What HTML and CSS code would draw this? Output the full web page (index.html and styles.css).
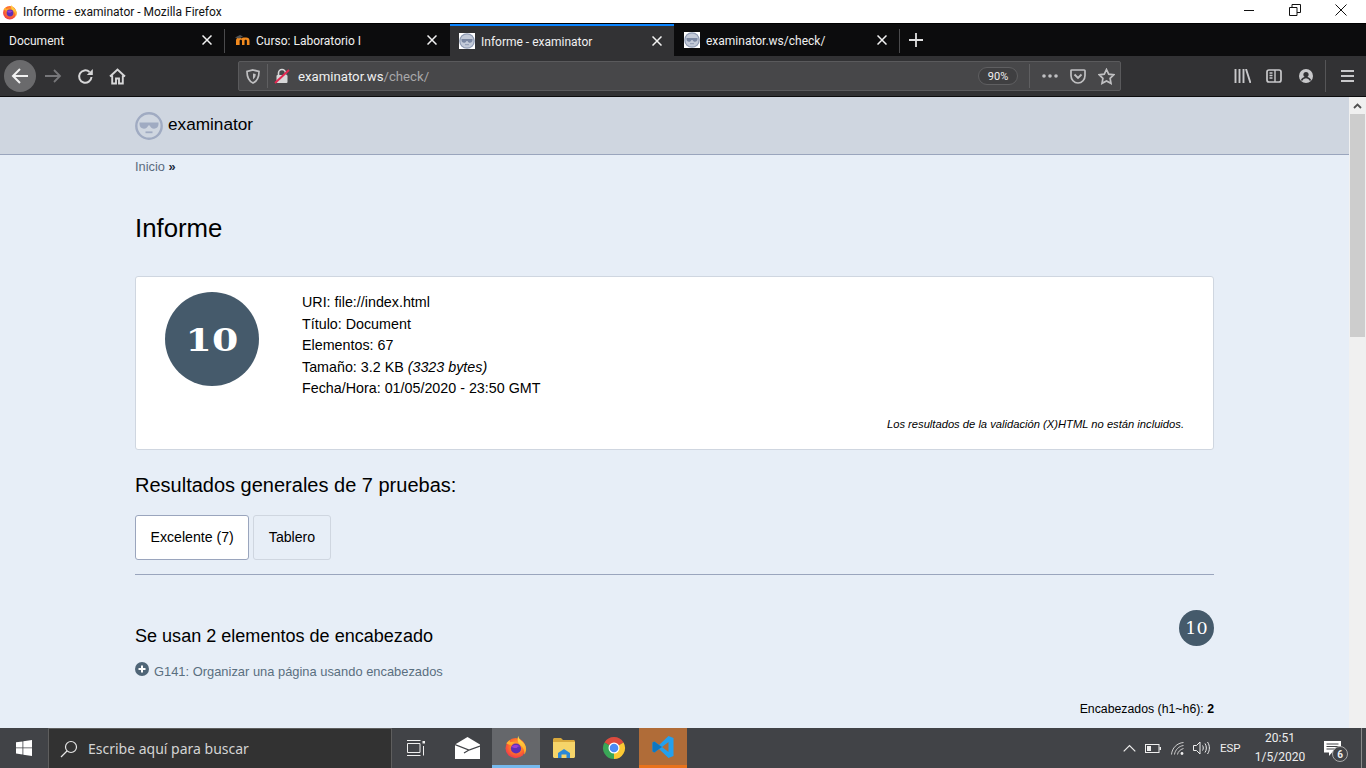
FILE: index.html
```html
<!DOCTYPE html>
<html lang="es">
<head>
<meta charset="utf-8">
<title>Informe - examinator - Mozilla Firefox</title>
<link rel="stylesheet" href="styles.css">
</head>
<body>
<svg class="defs" width="0" height="0" aria-hidden="true">
  <defs>
    <radialGradient id="ffbody" cx="0.55" cy="0.4" r="0.7">
      <stop offset="0" stop-color="#ffbd2e"/>
      <stop offset="0.55" stop-color="#ff6a2b"/>
      <stop offset="1" stop-color="#e8255e"/>
    </radialGradient>
    <linearGradient id="ffflame" x1="0" y1="0" x2="0" y2="1">
      <stop offset="0" stop-color="#ffe24a"/>
      <stop offset="1" stop-color="#ff9a22"/>
    </linearGradient>
    <symbol id="firefox" viewBox="0 0 32 32">
      <circle cx="15.500" cy="17.500" r="13.500" fill="url(#ffbody)"/>
      <path d="M19 1c.5 3 1.500 4.500 4 6.500 4 3 6.500 6.500 6.500 11 0 3-1 5.500-2.500 7.500.5-5-1-9.500-5-12.500C18 10.500 17.500 6 19 1z" fill="url(#ffflame)"/>
      <path d="M3 11c1.500-2 3-3.500 5-4.500-.5 1.500-.3 2.500.3 3.200 2-.6 4.700-.6 6.700.3-2.500.5-4 1.500-4.500 3-3 .5-5.500-.2-7.500-2z" fill="#ffb02e"/>
      <circle cx="16" cy="18" r="6.800" fill="#5e2fb5"/>
      <path d="M10 15.500c2-2.500 8-3.500 11.500 0-2.500-.5-3.500 0-4 1.500-2.500 1-5.500 0-7.500-1.500z" fill="#9a3fd0"/>
    </symbol>
    <symbol id="face" viewBox="0 0 28 28">
      <circle cx="14" cy="14" r="12.700" fill="none" stroke="#a0abc2" stroke-width="2.400"/>
      <path d="M4.500 10.500h19v1.800c0 2.600-2 4.400-4.400 4.400-2.200 0-3.700-1.200-4.300-3.200h-1.600c-.6 2-2.100 3.200-4.300 3.200-2.400 0-4.400-1.800-4.400-4.400z" fill="#a0abc2"/>
      <path d="M10.500 20.300h7" stroke="#a0abc2" stroke-width="1.800" fill="none"/>
    </symbol>
    <symbol id="favface" viewBox="0 0 16 16">
      <circle cx="8" cy="8" r="7.800" fill="#8e9ab3"/>
      <circle cx="8" cy="8" r="6.600" fill="#c3cad8"/>
      <path d="M2.500 6h11v1.200c0 1.500-1.100 2.500-2.500 2.500-1.200 0-2.100-.7-2.400-1.800h-1.200C7.100 9 6.200 9.700 5 9.700c-1.400 0-2.500-1-2.500-2.500z" fill="#7b88a3"/>
      <path d="M6 11.700h4" stroke="#8e9ab3" fill="none"/>
    </symbol>
    <symbol id="close" viewBox="0 0 10 10">
      <path d="M.5.500l9 9M9.500.500l-9 9" stroke="#f2f2f2" stroke-width="1.500" fill="none"/>
    </symbol>
  </defs>
</svg>

<div class="window">
  <header class="titlebar">
    <svg class="ti-logo"><use href="#firefox"/></svg>
    <span class="ti-text">Informe - examinator - Mozilla Firefox</span>
    <div class="ti-controls">
      <span class="ti-btn"><svg width="12" height="12" viewBox="0 0 12 12"><path d="M1 6.500h10" stroke="#111" fill="none"/></svg></span>
      <span class="ti-btn"><svg width="12" height="12" viewBox="0 0 12 12"><path d="M.5 3.500h7.500v8H.5zM3 3.500V.5h8.500v8H8" stroke="#111" fill="none"/></svg></span>
      <span class="ti-btn"><svg width="12" height="12" viewBox="0 0 12 12"><path d="M.5.500l11 11M11.500.500l-11 11" stroke="#111" fill="none"/></svg></span>
    </div>
  </header>

  <nav class="tabstrip">
    <div class="tab tab-sep">
      <span class="tab-label">Document</span>
      <svg class="tab-x"><use href="#close"/></svg>
    </div>
    <div class="tab">
      <svg class="tab-ico" viewBox="0 0 16 16"><path d="M1 13V8.500C1 6.500 2.500 5.500 4 5.500c1 0 1.800.4 2.300 1.100C7 5.900 7.800 5.500 8.800 5.500h2.400c2 0 3.300 1.200 3.300 3.200V13h-2.600V9c0-.9-.4-1.300-1.200-1.300S9.500 8.100 9.500 9v4H7V9c0-.9-.4-1.300-1.200-1.300-.7 0-1.200.4-1.200 1.300v4z" fill="#f28a1e"/><path d="M0 5.500L5 3l3 1.500-4 2z" fill="#555"/></svg>
      <span class="tab-label">Curso: Laboratorio I</span>
      <svg class="tab-x"><use href="#close"/></svg>
    </div>
    <div class="tab tab-active">
      <span class="tab-fav"><svg class="fav-face"><use href="#favface"/></svg></span>
      <span class="tab-label">Informe - examinator</span>
      <svg class="tab-x"><use href="#close"/></svg>
    </div>
    <div class="tab tab-last">
      <span class="tab-fav"><svg class="fav-face"><use href="#favface"/></svg></span>
      <span class="tab-label">examinator.ws/check/</span>
      <svg class="tab-x"><use href="#close"/></svg>
    </div>
    <span class="newtab"><svg width="16" height="16" viewBox="0 0 16 16"><path d="M8 1v14M1 8h14" stroke="#e0e0e0" stroke-width="1.800" fill="none"/></svg></span>
  </nav>

  <div class="toolbar">
    <span class="tb-btn tb-back"><svg width="20" height="20" viewBox="0 0 20 20"><path d="M18 10H3M10 3l-7 7 7 7" stroke="#f2f2f2" stroke-width="2" fill="none"/></svg></span>
    <span class="tb-btn"><svg width="18" height="18" viewBox="0 0 18 18"><path d="M1 9h15M10 3l6 6-6 6" stroke="#77777a" stroke-width="1.800" fill="none"/></svg></span>
    <span class="tb-btn"><svg width="17" height="17" viewBox="0 0 17 17"><path d="M14.500 9a6.200 6.200 0 1 1-2-5" stroke="#d7d7d8" stroke-width="2" fill="none"/><path d="M15.800 1v6h-6z" fill="#d7d7d8"/></svg></span>
    <span class="tb-btn"><svg width="17" height="17" viewBox="0 0 17 17"><path d="M1 8.500L8.500 1.500 16 8.500M3.200 7.500V15.500h3.800v-5h3v5h3.800V7.500" stroke="#d7d7d8" stroke-width="1.900" fill="none"/></svg></span>

    <div class="urlbar">
      <span class="url-shield"><svg width="14" height="15" viewBox="0 0 14 15"><path d="M7 1l6 1.500c0 5.500-1.500 9.500-6 11.500C2.500 12 1 8 1 2.500z" stroke="#c0c0c2" stroke-width="1.700" fill="none"/><path d="M7 4.500l2.700.6c0 2.500-.7 4-2.700 5.400z" fill="#c0c0c2"/></svg></span>
      <span class="url-sep"></span>
      <span class="url-lock"><svg width="16" height="16" viewBox="0 0 16 16"><path d="M4.500 7V5a3.500 3.500 0 0 1 7 0v2" stroke="#d7d7d8" stroke-width="1.600" fill="none"/><rect x="2.500" y="7" width="11" height="8" rx="1" fill="#d7d7d8"/><path d="M1 15L15 2" stroke="#e22850" stroke-width="2"/></svg></span>
      <span class="url-text">examinator.ws<span class="url-dim">/check/</span></span>
      <span class="url-zoom">90%</span>
      <span class="url-sep url-sep-b"></span>
      <span class="url-ico url-dots"><svg width="16" height="4" viewBox="0 0 16 4"><circle cx="2" cy="2" r="1.800" fill="#c0c0c2"/><circle cx="8" cy="2" r="1.800" fill="#c0c0c2"/><circle cx="14" cy="2" r="1.800" fill="#c0c0c2"/></svg></span>
      <span class="url-ico"><svg width="16" height="15" viewBox="0 0 16 15"><path d="M1.800 1h12.400c.5 0 .8.300.8.800v4.700c0 4-3 7.500-7 7.500s-7-3.500-7-7.500V1.800c0-.5.300-.8.800-.8z" stroke="#c0c0c2" stroke-width="1.700" fill="none"/><path d="M4.500 5.500L8 9l3.500-3.500" stroke="#c0c0c2" stroke-width="1.900" fill="none"/></svg></span>
      <span class="url-ico"><svg width="17" height="17" viewBox="0 0 17 17"><path d="M8.500 1.500l2.200 4.600 5 .7-3.600 3.500.9 5-4.500-2.400L4 15.300l.9-5L1.300 6.800l5-.7z" stroke="#c0c0c2" stroke-width="1.700" fill="none"/></svg></span>
    </div>

    <div class="tb-right">
      <span class="tb-btn"><svg width="17" height="14" viewBox="0 0 17 14"><path d="M1.500 0v14M5.500 0v14M9.500 0v14M12 0l4.500 14" stroke="#c8c8ca" stroke-width="1.900" fill="none"/></svg></span>
      <span class="tb-btn"><svg width="16" height="14" viewBox="0 0 16 14"><rect x="1" y="1" width="14" height="12" rx="2" stroke="#c8c8ca" stroke-width="1.700" fill="none"/><path d="M9 1v12M3.500 4H6.500M3.500 6.500H6.500M3.500 9H6.500" stroke="#c8c8ca" stroke-width="1.400" fill="none"/></svg></span>
      <span class="tb-btn"><svg width="14" height="14" viewBox="0 0 14 14"><circle cx="7" cy="7" r="7" fill="#c8c8ca"/><circle cx="7" cy="5.500" r="2.600" fill="#323234"/><path d="M2.500 11.500c.8-2 2.500-3 4.500-3s3.700 1 4.500 3" stroke="#323234" stroke-width="1.600" fill="none"/></svg></span>
      <span class="tb-divider"></span>
      <span class="tb-btn tb-menu"><svg width="13" height="12" viewBox="0 0 13 12"><path d="M0 1h13M0 6h13M0 11h13" stroke="#c8c8ca" stroke-width="1.800" fill="none"/></svg></span>
    </div>
  </div>

  <div class="viewport">
    <main class="page">
      <div class="site-head">
        <div class="wrap brand">
          <svg class="brand-face"><use href="#face"/></svg>
          <span class="brand-name">examinator</span>
        </div>
      </div>
      <div class="wrap">
        <div class="crumb"><a class="crumb-link">Inicio</a> <b class="crumb-sep">»</b></div>
        <h1 class="title">Informe</h1>

        <section class="summary">
          <div class="summary-row">
            <div class="score-big"><span class="score-big-num">10</span></div>
            <div class="meta">
              <div>URI: file://index.html</div>
              <div>Título: Document</div>
              <div>Elementos: 67</div>
              <div>Tamaño: 3.2 KB <em>(3323 bytes)</em></div>
              <div>Fecha/Hora: 01/05/2020 - 23:50 GMT</div>
            </div>
          </div>
          <p class="note">Los resultados de la validación (X)HTML no están incluidos.</p>
        </section>

        <h2 class="results">Resultados generales de 7 pruebas:</h2>
        <div class="pills">
          <span class="pill pill-on">Excelente (7)</span>
          <span class="pill">Tablero</span>
        </div>
        <hr class="rule">

        <div class="test-head">
          <h3 class="test-title">Se usan 2 elementos de encabezado</h3>
          <span class="score-small">10</span>
        </div>
        <div class="technique">
          <svg class="tech-plus" viewBox="0 0 14 14"><circle cx="7" cy="7" r="7" fill="#4f6577"/><path d="M7 3.500v7M3.500 7h7" stroke="#fff" stroke-width="2"/></svg>
          <span>G141: Organizar una página usando encabezados</span>
        </div>
        <div class="counter">Encabezados (h1~h6): <b>2</b></div>
      </div>
    </main>
    <aside class="scrollbar">
      <span class="sb-up"><svg width="9" height="6" viewBox="0 0 9 6"><path d="M1 5l3.500-3.500L8 5" stroke="#505050" stroke-width="1.800" fill="none"/></svg></span>
      <span class="sb-thumb"></span>
    </aside>
  </div>

  <footer class="taskbar">
    <span class="tk-start"><svg width="16" height="16" viewBox="0 0 16 16"><path d="M0 2.300L6.500 1.400V7.500H0zM7.300 1.300L16 0V7.500H7.300zM0 8.300H6.500V14.500L0 13.600zM7.300 8.300H16V16L7.300 14.700z" fill="#fff"/></svg></span>
    <div class="tk-search">
      <svg width="18" height="18" viewBox="0 0 18 18"><circle cx="11" cy="7" r="5.500" stroke="#e6e6e6" stroke-width="1.200" fill="none"/><path d="M7 11l-6 6" stroke="#e6e6e6" stroke-width="1.300"/></svg>
      <span class="tk-search-text">Escribe aquí para buscar</span>
    </div>
    <span class="tk-app tk-view"><svg width="18" height="16" viewBox="0 0 18 16"><path d="M.5 3.500h12.500v9H.5zM0 .5h13.500M0 15.500h13.500M16.500 6v9.500" stroke="#eee" fill="none"/><rect x="15.500" y="1" width="2.500" height="2.500" fill="#eee"/></svg></span>
    <span class="tk-app tk-mail"><svg width="25" height="22" viewBox="0 0 25 22"><path d="M12.500 0L25 7.500V22H0V7.500z" fill="#fff"/><path d="M0 7.500l14 5.500L25 9M14 13l-5 3" stroke="#414347" stroke-width="1.200" fill="none"/></svg></span>
    <span class="tk-app tk-ff"><svg class="tk-ffi"><use href="#firefox"/></svg></span>
    <span class="tk-app"><svg width="22" height="20" viewBox="0 0 22 20"><path d="M0 1.500C0 .7.700 0 1.500 0H8l2 2h10.500c.8 0 1.500.7 1.500 1.500V5H0z" fill="#d9a93c"/><path d="M0 4h22v14.500c0 .8-.7 1.500-1.500 1.500h-19C.7 20 0 19.300 0 18.500z" fill="#f6d469"/><path d="M5 20v-5l6-4 6 4v5h-3.500v-3.500h-5V20z" fill="#2b88d8"/></svg></span>
    <span class="tk-app tk-chrome"><svg width="24" height="24" viewBox="0 0 24 24"><path d="M2.470 6.500A11 11 0 0 1 21.530 6.500L12 12z" fill="#dd4b3e"/><path d="M21.530 6.500A11 11 0 0 1 12 23L12 12z" fill="#fcc934"/><path d="M12 23A11 11 0 0 1 2.470 6.500L12 12z" fill="#3aa757"/><circle cx="12" cy="12" r="5.500" fill="#fff"/><circle cx="12" cy="12" r="4.300" fill="#4b8bf5"/></svg></span>
    <span class="tk-app tk-code"><svg width="24" height="24" viewBox="0 0 24 24"><path d="M17.500 1L8 10 3.500 6.500 1.500 7.500v9l2 1L8 14l9.500 9 5-2V3zM17.500 7v10L11 12z" fill="#23a0ee" fill-rule="evenodd"/><path d="M8 10L3.500 6.500 1.500 7.500v9l2 1L8 14l3-2z" fill="#0f76bf"/></svg></span>

    <div class="tray">
      <svg class="tr-chev" width="13" height="8" viewBox="0 0 13 8"><path d="M.7 7.300L6.500 1.500l5.800 5.800" stroke="#eee" stroke-width="1.200" fill="none"/></svg>
      <svg class="tr-batt" width="16" height="9" viewBox="0 0 16 9"><rect x=".5" y=".5" width="13.500" height="8" stroke="#eee" fill="none"/><rect x="2" y="2" width="4" height="5" fill="#eee"/><rect x="14.500" y="3" width="1.500" height="3" fill="#eee"/></svg>
      <svg class="tr-wifi" width="14" height="13" viewBox="0 0 14 13"><path d="M.5 12.500C1 6 6 1 12.500.5M3.500 12.500C4 8 8 4 12.500 3.500M6.500 12.500c.3-2.500 2.500-5 6-6" stroke="#dcdcdc" stroke-width=".9" fill="none"/><circle cx="11" cy="11.500" r="1.400" fill="#eee"/></svg>
      <svg class="tr-vol" width="17" height="14" viewBox="0 0 17 14"><path d="M.5 4.500h3L7 1v12L3.500 9.500h-3zM9.500 4.500c1 1.500 1 3.500 0 5M12 2.500c1.800 2.500 1.800 6.500 0 9M14.500 1c2.500 3.500 2.500 8.500 0 12" stroke="#eee" fill="none"/></svg>
      <span class="tr-lang">ESP</span>
      <span class="tr-clock"><span class="tr-time">20:51</span><span class="tr-date">1/5/2020</span></span>
      <span class="tr-notif">
        <svg width="17" height="15" viewBox="0 0 17 15"><path d="M0 0h17v11.500H8L5 15v-3.500H0z" fill="#fff"/><path d="M2.500 3h12M2.500 5.500h12M2.500 8h8" stroke="#414347" fill="none"/></svg>
        <span class="tr-badge">6</span>
      </span>
    </div>
    <span class="tk-desktop"></span>
  </footer>
</div>
</body>
</html>
```
FILE: styles.css
```css
* { box-sizing: border-box; }
html, body { margin: 0; padding: 0; height: 100%; overflow: hidden; }
body { font-family: "Liberation Sans", Arial, sans-serif; color: #000; background: #e7eef7; }
svg { display: block; flex: none; }
.defs { position: absolute; }
.window { width: 1366px; height: 768px; display: flex; flex-direction: column; }

/* title bar */
.titlebar { height: 23px; flex: none; background: #fff; display: flex; align-items: center; padding-left: 2px; font-family: Roboto, sans-serif; font-size: 12px; color: #111; }
.ti-logo { width: 16px; height: 16px; margin-right: 5px; }
.ti-controls { margin-left: auto; display: flex; padding-right: 2px; }
.ti-btn { width: 46px; height: 23px; padding-bottom: 3px; display: flex; align-items: center; justify-content: center; }

/* tabs */
.tabstrip { height: 33px; flex: none; background: #0c0c0d; display: flex; font-family: Roboto, sans-serif; font-size: 12px; color: #f0f0f0; border-top: 1px solid #000; }
.tab { width: 225px; height: 32px; display: flex; align-items: center; padding: 0 13px 0 10px; position: relative; }
.tab-label { margin-top: 2px; }
.tab-sep { padding-left: 9px; }
.tab-sep::after, .tab-last::after { content: ""; position: absolute; right: 0; top: 5px; height: 24px; width: 1px; background: #4a4a4c; }
.tab-last { width: 226px; }
.tab-active { width: 224px; height: 37px; background: #323234; border-top: 2px solid #0a84ff; padding: 0 12px 5px 9px; }
.tab-active .tab-label, .tab-last .tab-label { margin-left: 6px; }
.tab-last { padding-left: 10px; }
.tab-ico { width: 16px; height: 16px; margin-right: 5px; }
.tab-fav { width: 16px; height: 16px; background: #fff; display: block; }
.fav-face { width: 16px; height: 16px; }
.tab-x { width: 10px; height: 10px; margin-left: auto; }
.newtab { width: 32px; display: flex; align-items: center; justify-content: center; height: 32px; }

/* toolbar */
.toolbar { height: 41px; flex: none; background: #323234; border-bottom: 1px solid #0c0c0d; display: flex; align-items: center; padding-left: 4px; }
.tb-btn { width: 32px; height: 32px; display: flex; align-items: center; justify-content: center; color: #ddd; }
.tb-back { background: #6a6a6c; border-radius: 50%; margin-right: 1px; }
.urlbar { width: 883px; height: 30px; margin-left: 105px; background: #474749; border: 1px solid #5a5a5c; border-radius: 2px; display: flex; align-items: center; font-family: Roboto, sans-serif; font-size: 13.200px; color: #f0f0f0; }
.url-shield { width: 28px; display: flex; justify-content: center; }
.url-sep { width: 1px; height: 24px; background: #5f5f61; }
.url-lock { margin-left: 6px; margin-right: 8px; }
.url-dim { color: #a8a8aa; }
.url-zoom { margin-left: auto; width: 40px; height: 18px; border: 1px solid #5f5f61; border-radius: 9px; background: #3f3f41; display: flex; align-items: center; justify-content: center; font-size: 11px; }
.url-sep-b { margin-left: 11px; }
.url-ico { width: 28px; display: flex; justify-content: center; }
.url-dots { margin-left: 6px; }
.url-ico:last-child { margin-right: 0; }
.tb-right { display: flex; align-items: center; margin-left: 105px; }
.tb-divider { width: 1px; height: 32px; background: #555557; margin-left: 3px; }
.tb-menu { margin-left: 5px; }

/* viewport */
.viewport { flex: 1; min-height: 0; display: flex; }
.page { flex: 1; min-width: 0; overflow: hidden; background: #e7eef7; }
.wrap { width: 1079px; margin: 0 auto; }
.site-head { height: 58px; background: #cfd6e0; border-bottom: 1px solid #9aa5bd; display: flex; align-items: center; }
.brand { display: flex; align-items: center; gap: 5px; }
.brand-face { width: 28px; height: 28px; }
.brand-name { font-size: 17.200px; padding-bottom: 2px; }
.crumb { height: 24px; line-height: 24px; font-size: 12.800px; color: #5a6b80; }
.crumb-sep { color: #1d2c3c; }
.title { margin: 29px 0 0; height: 40px; line-height: 40px; font-size: 25.800px; font-weight: 400; }
.summary { margin-top: 28px; height: 174px; background: #fff; border: 1px solid #cfd6e0; border-radius: 3px; padding: 15px 29px 17px; }
.summary-row { display: flex; height: 108px; }
.score-big { width: 94px; height: 94px; border-radius: 50%; background: #455a6b; color: #fff; display: flex; align-items: center; justify-content: center; font-family: "DejaVu Serif", serif; font-weight: 700; font-size: 31.500px; }
.score-big-num { display: block; transform: scaleX(1.2); }
.meta { margin-left: 43px; font-size: 14.300px; line-height: 21.600px; }
.note { margin: 16px 0 0; height: 16px; line-height: 16px; text-align: right; font-style: italic; font-size: 11.200px; }
.results { margin: 20px 0 0; height: 30px; line-height: 30px; font-size: 20px; font-weight: 400; }
.pills { display: flex; gap: 4px; margin-top: 15px; }
.pill { height: 45px; display: flex; align-items: center; padding: 0 14.500px 2px; font-size: 14.150px; border: 1px solid #cfd6e0; border-radius: 3px; }
.pill-on { background: #fff; border-color: #9aa5bd; }
.rule { margin: 14px 0 0; height: 1px; border: 0; background: #9aa5bd; }
.test-head { display: flex; justify-content: space-between; align-items: flex-start; margin-top: 35px; }
.test-title { margin: 14px 0 0; height: 24px; line-height: 24px; font-size: 18.060px; font-weight: 400; }
.score-small { width: 35px; height: 36px; border-radius: 50%; background: #455a6b; color: #fff; display: flex; align-items: center; justify-content: center; font-family: "DejaVu Serif", serif; font-size: 17.500px; }
.technique { display: flex; gap: 5px; align-items: flex-start; margin-top: 14px; height: 20px; line-height: 20px; font-size: 12.900px; color: #5a6f80; }
.tech-plus { width: 14px; height: 14px; }
.counter { margin-top: 17px; height: 20px; line-height: 20px; text-align: right; font-size: 12.300px; }

/* scrollbar */
.scrollbar { width: 17px; flex: none; background: #f0f0f0; display: flex; flex-direction: column; align-items: center; }
.sb-up { height: 17px; display: flex; align-items: center; justify-content: center; }
.sb-thumb { width: 15px; height: 223px; background: #cdcdcd; }

/* taskbar */
.taskbar { height: 40px; flex: none; background: #414347; display: flex; align-items: center; font-family: Roboto, sans-serif; color: #eee; }
.tk-start { width: 48px; height: 40px; display: flex; align-items: center; justify-content: center; }
.tk-search { width: 344px; height: 40px; background: #323232; border: 1px solid #5e5e5e; border-bottom: 0; display: flex; align-items: center; padding-left: 11px; font-family: "Noto Sans", sans-serif; }
.tk-search-text { margin-left: 10px; font-size: 14px; color: #d4d4d4; }
.tk-app { width: 48px; height: 40px; display: flex; align-items: center; justify-content: center; }
.tk-mail { width: 52px; padding-left: 3px; }
.tk-chrome { width: 51px; }
.tk-ff { background: #65676b; border-bottom: 3px solid #76b9ed; }
.tk-ffi { width: 24px; height: 24px; }
.tk-code { background: #b06c38; border-bottom: 3px solid #e8721c; }
.tray { margin-left: auto; display: flex; align-items: center; position: relative; height: 40px; font-size: 12px; }
.tr-chev { margin-right: 9px; }
.tr-batt { margin-right: 10px; }
.tr-wifi { margin-right: 8px; }
.tr-vol { margin-right: 10px; }
.tr-lang { width: 20px; margin-right: 7px; font-size: 11.500px; }
.tr-clock { display: flex; flex-direction: column; align-items: center; width: 62px; padding-left: 4px; line-height: 19px; }
.tr-notif { position: relative; width: 52px; display: flex; justify-content: center; padding-right: 5px; padding-top: 1px; }
.tr-badge { position: absolute; left: 23px; top: 6px; width: 16px; height: 16px; border-radius: 50%; background: #414347; border: 1px solid #aaa; font-size: 10px; font-weight: 700; display: flex; align-items: center; justify-content: center; }
.tk-desktop { width: 5px; height: 40px; border-left: 1px solid #8a8a8a; }
```
